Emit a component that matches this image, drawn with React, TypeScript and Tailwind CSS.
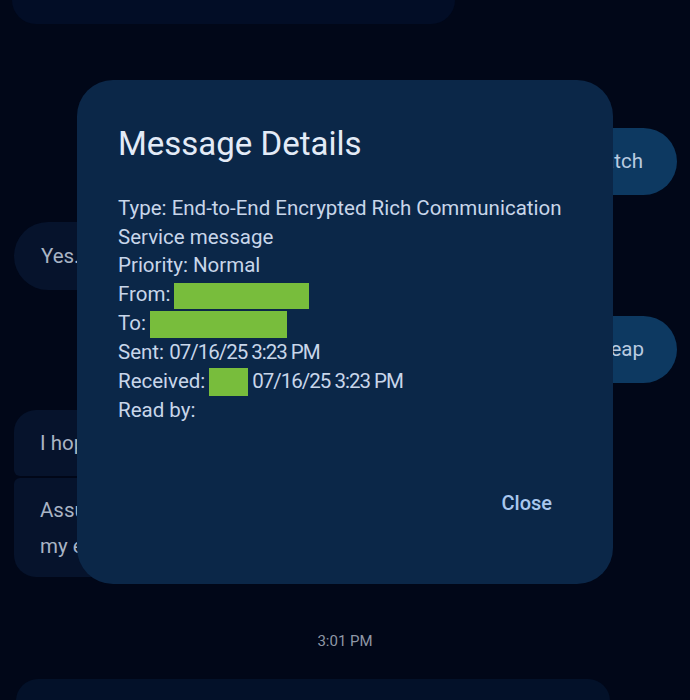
import React from 'react';

const redact = 'inline-block align-middle bg-[#78bd3c]';
const date = 'tracking-[-1px]';

export default function App() {
  return (
    <main
      className="relative h-[700px] w-[690px] overflow-hidden bg-[#010718]"
      style={{ fontFamily: 'Roboto, "Noto Sans", sans-serif' }}
    >
      {/* conversation behind the dialog */}
      <div className="flex flex-col">
        <div className="ml-[12px] h-[24px] w-[443px] rounded-b-[24px] bg-[#020d26]" />

        <div className="mt-[104px] mr-[13px] flex h-[67px] w-[320px] items-center justify-end self-end rounded-full bg-[#0d3961] pr-[34px] text-[20.5px] text-[#b9cbe0]">
          Good catch
        </div>

        <div className="mt-[27px] ml-[14px] flex h-[68px] w-[330px] items-center rounded-[34px] bg-[#06132c] pl-[27px] text-[20.5px] text-[#a9b4c4]">
          Yes. That works for me
        </div>

        <div className="mt-[26px] mr-[13px] flex h-[67px] w-[320px] items-center justify-end self-end rounded-full bg-[#0d3961] pr-[33px] text-[20.5px] text-[#b9cbe0]">
          Sounds cheap
        </div>

        <div className="mt-[27px] ml-[14px] flex w-[500px] flex-col gap-[2px]">
          <div className="flex h-[66px] items-center rounded-t-[22px] rounded-b-[6px] bg-[#06132c] pl-[26px] text-[20.5px] text-[#a9b4c4]">
            I hope it goes well
          </div>
          <div className="flex h-[99px] flex-col justify-center rounded-t-[6px] rounded-b-[22px] bg-[#06132c] pl-[26px] text-[20.5px] leading-[36px] text-[#a9b4c4]">
            <span>Assuming everything is in order on</span>
            <span>my end</span>
          </div>
        </div>

        <div className="mt-[53px] text-center text-[15px] text-[#8f97a6]">3:01 PM</div>

        <div className="mt-[26px] ml-[16px] h-[60px] w-[594px] rounded-t-[22px] bg-[#031129]" />
      </div>

      {/* details dialog */}
      <div className="absolute left-[77px] top-[80px] flex h-[504px] w-[536px] flex-col rounded-[36px] bg-[#0b2748] pl-[41px] pr-[30px] pt-[44px]">
        <h1 className="text-[33px] leading-[40px] text-[#e3ebf7]">Message Details</h1>
        <div className="mt-[30px] text-[20.5px] leading-[28.7px] text-[#c8d6ea]">
          <p>Type: End-to-End Encrypted Rich Communication Service message</p>
          <p>Priority: Normal</p>
          <p>
            From:<span className={`${redact} ml-[4px] h-[26px] w-[135px]`} />
          </p>
          <p>
            To:<span className={`${redact} ml-[4px] h-[27px] w-[137px]`} />
          </p>
          <p>
            Sent: <span className={date}>07/16/25 3:23 PM</span>
          </p>
          <p>
            Received:<span className={`${redact} ml-[4px] mr-[4px] h-[28px] w-[39px]`} />
            <span className={date}>07/16/25 3:23 PM</span>
          </p>
          <p>Read by:</p>
        </div>
        <div className="mt-auto mb-[66px] flex justify-end pr-[31px]">
          <button className="text-[20px] font-medium text-[#a9c7ee]">Close</button>
        </div>
      </div>
    </main>
  );
}
